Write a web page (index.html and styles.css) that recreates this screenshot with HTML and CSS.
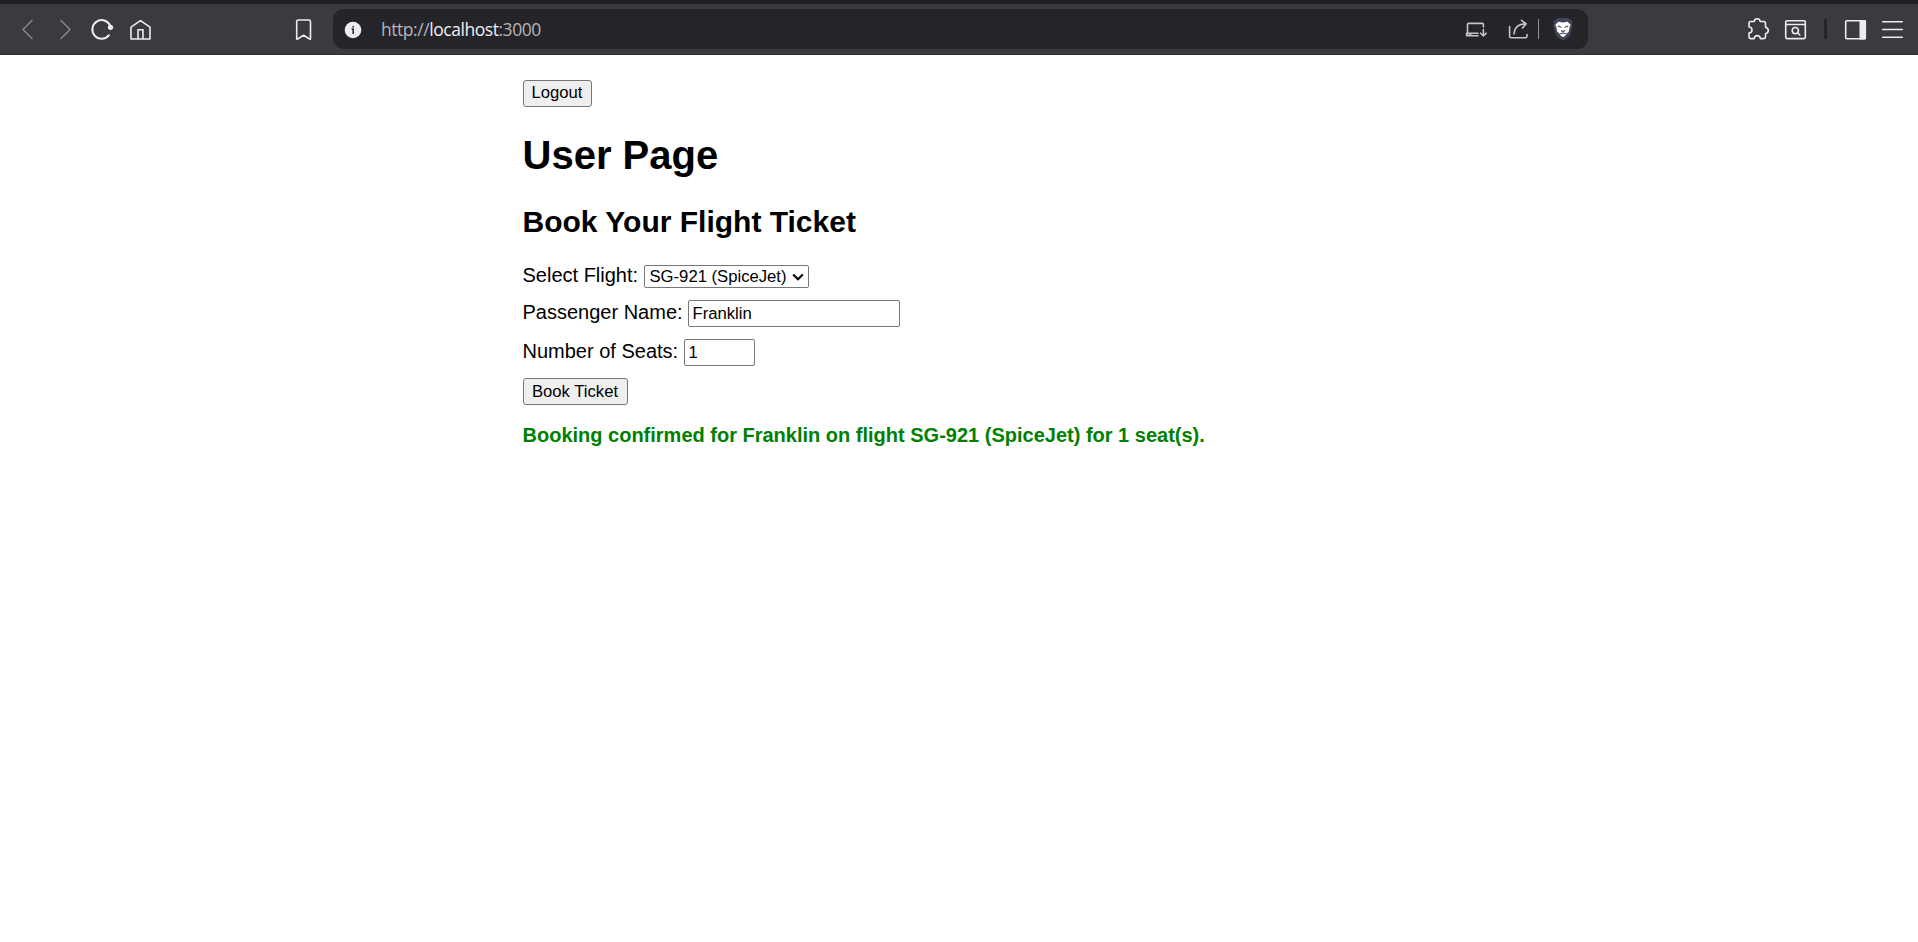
FILE: index.html
```
<!DOCTYPE html>
<html lang="en">
<head>
<meta charset="utf-8">
<title>User Page</title>
<link rel="stylesheet" href="styles.css">
</head>
<body>
<header class="toolbar">
  <nav class="nav">
    <svg class="icon dim" viewBox="15 18 24 24"><path d="M32 20.5L23 29.5L32 38.5"/></svg>
    <svg class="icon dim" viewBox="53 18 24 24"><path d="M61 20.5L70 29.5L61 38.5"/></svg>
    <svg class="icon" viewBox="90 18 24 24"><path class="bold" d="M110.5 26.5A9.3 9.3 0 1 0 109 35.2"/><circle class="solid" cx="110.5" cy="27.3" r="2.6"/></svg>
    <svg class="icon" viewBox="128 18 24 24"><path d="M131 27.2L140.5 20.7L150 27.2V39H131ZM138 39V29.7H143V39"/></svg>
  </nav>
  <svg class="icon bookmark" viewBox="291 18 24 24"><path d="M296.7 21.5Q296.7 20 298.2 20H309Q310.5 20 310.5 21.5V38.6Q310.5 39.8 309.5 39L303.6 35.2L297.7 39Q296.7 39.8 296.7 38.6Z"/></svg>
  <div class="address">
    <svg class="icon info" viewBox="341 18 24 24"><circle class="solid" cx="353" cy="30" r="8.3"/><path class="ink" d="M351.6 29H353.2V34M353.2 26V27.6"/></svg>
    <div class="url">http://<span class="host">localhost</span>:3000</div>
    <div class="actions">
      <svg class="icon soft" viewBox="1464 18 24 24"><path d="M1467.5 33V24.5Q1467.5 23.4 1468.6 23.4H1482.3Q1483.4 23.4 1483.4 24.5V27M1478 33.2H1466.6V35.8H1478M1467 33.7H1469.5L1471 35M1483.4 29.5V35.8M1480.6 33.2L1483.4 36L1486.2 33.2"/></svg>
      <svg class="icon soft" viewBox="1506 18 24 24"><path d="M1509.6 26.5V36.2Q1509.6 37.8 1511.2 37.8H1525.4Q1527 37.8 1527 36.2V34.5M1514 34Q1514.6 24 1525.8 23.8M1521.5 20.3L1526.2 23.8L1522.4 28"/></svg>
      <span class="rule"></span>
      <svg class="icon" viewBox="1551 18 24 24"><path class="shield" d="M1557.5 18H1568.5L1570.5 20L1572.5 20.5L1572 24L1572.5 26L1570 35.5Q1569 37 1563 40.5Q1557 37 1556 35.5L1553.3 26L1554 24L1553.3 20.5L1555.5 20Z"/><path class="mane" d="M1558.5 21.8L1563 22.4L1567.5 21.8L1570.7 24.8L1569.5 27.5L1568.8 31.5L1566.5 33.5L1566 35L1563 37.2L1560 35L1559.5 33.5L1557.2 31.5L1556.5 27.5L1555.3 24.8Z"/><path class="face" d="M1558 26L1561 27.2M1568 26L1565 27.2M1561.5 30.7L1563 31.8L1564.5 30.7M1560.3 33.8L1563 33L1565.7 33.8"/></svg>
    </div>
  </div>
  <div class="tools">
    <svg class="icon" viewBox="1746 18 24 24"><path d="M1749 23.2Q1749 21.5 1750.7 21.5H1754.3Q1754.6 18.8 1757.2 18.8T1760.2 21.5H1763.8Q1765.5 21.5 1765.5 23.2V27.3Q1768.3 28 1768.3 30.6T1765.5 33.7V37Q1765.5 38.6 1763.8 38.6H1760.5Q1759.8 35.6 1757.2 35.6T1754.2 38.6H1750.7Q1749 38.6 1749 37V33Q1752 32.6 1752 29.9T1749 27Z"/></svg>
    <svg class="icon" viewBox="1784 18 24 24"><path d="M1787 20.8H1804Q1805.3 20.8 1805.3 22V37.3Q1805.3 38.6 1804 38.6H1787Q1785.7 38.6 1785.7 37.3V22Q1785.7 20.8 1787 20.8ZM1786 24.5H1805M1797.8 33L1799.8 35"/><circle cx="1795.3" cy="30.6" r="3.1"/></svg>
    <span class="split"></span>
    <svg class="icon" viewBox="1844 18 24 24"><rect x="1845.7" y="20.7" width="19.6" height="18" rx="1"/><path class="solid" d="M1859.5 20H1865Q1866 20 1866 21V38.5Q1866 39.4 1865 39.4H1859.5Z"/></svg>
    <svg class="icon" viewBox="1881 18 24 24"><path d="M1882.7 21.7H1902.3M1882.7 29.5H1902.3M1882.7 37.2H1902.3"/></svg>
  </div>
</header>
<main class="page">
  <button class="btn logout" type="button">Logout</button>
  <h1>User Page</h1>
  <h2>Book Your Flight Ticket</h2>
  <form class="booking">
    <div class="row flight"><label for="flight">Select Flight:</label>
      <div class="picker"><select id="flight"><option>SG-921 (SpiceJet)</option></select><svg class="chevron" viewBox="0 0 12 8"><path d="M1.2 1.5L6 6.2L10.8 1.5"/></svg></div>
    </div>
    <div class="row name"><label for="passenger">Passenger Name:</label><input id="passenger" type="text" value="Franklin"></div>
    <div class="row seats"><label for="seats">Number of Seats:</label><input id="seats" type="text" value="1"></div>
    <button class="btn book" type="button">Book Ticket</button>
  </form>
  <p class="message">Booking confirmed for Franklin on flight SG-921 (SpiceJet) for 1 seat(s).</p>
</main>
</body>
</html>
```
FILE: styles.css
```
* { box-sizing: border-box; }
body {
  margin: 0;
  background: #fff;
  color: #000;
  font: 20px/23px "Liberation Sans", Arial, sans-serif;
}

.toolbar {
  display: flex;
  align-items: center;
  height: 55px;
  padding: 0 13px 0 15px;
  border-top: 4px solid #1f1e25;
  border-bottom: 1px solid #2d2c31;
  background: #3b3a3f;
}
.icon {
  flex: none;
  width: 24px;
  height: 24px;
  margin-top: 2px;
  fill: none;
  stroke: #ededf0;
  stroke-width: 1.6;
  stroke-linecap: round;
  stroke-linejoin: round;
}
.dim { stroke: #858489; }
.soft { stroke: #c6c5ca; }
.bold { stroke-width: 2; }
.solid { fill: #ededf0; stroke: none; }
.ink { stroke: #252429; stroke-width: 1.5; stroke-linecap: butt; }
.shield { fill: #42445a; stroke: none; }
.mane { fill: #fff; stroke: none; }
.face { stroke: #42445a; stroke-width: 1.1; }

.nav { display: flex; gap: 14px; width: 276px; }
.nav .icon:nth-child(3) { margin-left: -1px; }
.bookmark { margin-right: 18px; }
.address {
  display: flex;
  align-items: center;
  width: 1255px;
  height: 40px;
  padding: 0 13px 0 8px;
  border-radius: 11px;
  background: #252429;
}
.url {
  margin-left: 16px;
  color: #b5b4b9;
  font: 17.5px/24px "Open Sans", "Noto Sans", sans-serif;
  letter-spacing: -0.45px;
}
.host { color: #f0f0f3; }
.actions { display: flex; align-items: center; margin-left: auto; }
.actions .icon:first-child { margin-right: 18px; }
.rule { width: 1px; height: 20px; margin: 0 12px 0 8px; background: #8e8d92; }
.tools { display: flex; align-items: center; margin-left: auto; }
.tools .icon:first-child { margin-right: 14px; }
.split { width: 3px; height: 20px; margin: 0 17px 0 16px; border-radius: 1px; background: #252429; }
.tools .icon:last-child { margin-left: 13px; }

.page { width: 873px; margin: 0 auto; padding-top: 25px; }
.btn {
  display: block;
  height: 27px;
  padding: 0;
  border: 1px solid #767676;
  border-radius: 3px;
  background: #efefef;
  color: #000;
  font: 16.667px/19px "Liberation Sans", Arial, sans-serif;
}
.logout { width: 69px; padding-bottom: 2px; }
.book { width: 105px; }
h1 { margin: 25px 0 0; font-size: 40px; line-height: 46px; }
h2 { margin: 27px 0 0; font-size: 30px; line-height: 34px; }
.booking { margin-top: 26px; }
.row { display: flex; }
label { white-space: nowrap; }
.flight { height: 35px; }
.flight label { width: 121px; margin-top: -1px; }
.name { height: 39px; }
.name label { width: 165px; margin-top: 1px; }
.seats { height: 39px; }
.seats label { width: 161px; margin-top: 1px; }
select, input {
  height: 27px;
  margin: 0;
  padding: 1px 4px;
  border: 1px solid #767676;
  border-radius: 2px;
  background: #fff;
  color: #000;
  font: 16.667px/19px "Liberation Sans", Arial, sans-serif;
}
#passenger { width: 212px; }
#seats { width: 71px; }
.picker { position: relative; height: 23px; }
select { display: block; width: 165px; height: 23px; padding: 0 5px; appearance: none; }
.chevron {
  position: absolute;
  top: 8px;
  right: 5px;
  width: 12px;
  height: 8px;
  fill: none;
  stroke: #000;
  stroke-width: 2.2;
  pointer-events: none;
}
.message { margin: 19px 0 0; color: #008000; font-weight: bold; }
```
